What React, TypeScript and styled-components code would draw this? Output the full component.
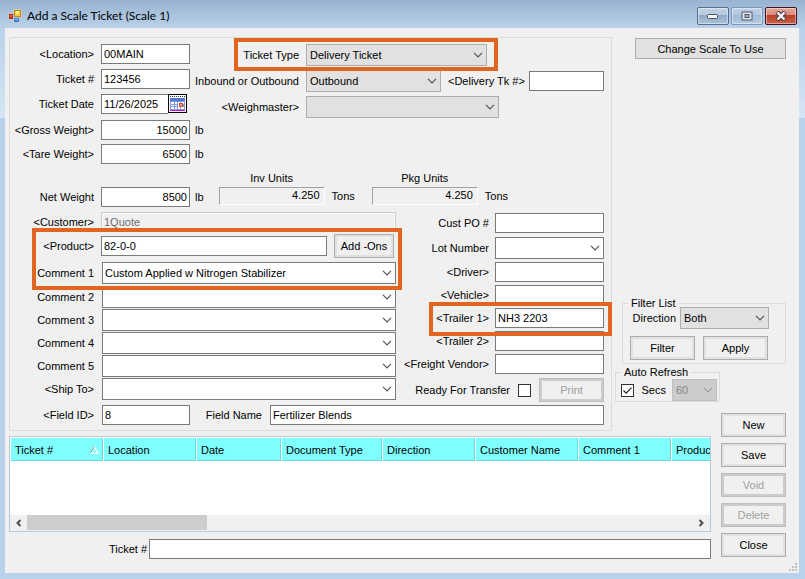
import React from "react";
import styled, { createGlobalStyle, css } from "styled-components";

const Global = createGlobalStyle`
  * { box-sizing: border-box; }
  body { margin: 0; }
  body, input, select, button, th {
    font-family: "Liberation Sans", Arial, sans-serif;
    font-size: 11px;
    line-height: 14px;
    color: #000;
  }
`;

const Window = styled.div`
  min-height: 100vh;
  display: flex;
  flex-direction: column;
  padding: 0 6px 6px 5px;
  background: linear-gradient(#98b3d0 0, #b9d1ea 28px, #d7e5f5 118px, #b9d1ea 118px);
`;

const TitleBar = styled.header`
  display: flex;
  align-items: center;
  height: 28px;
  padding: 4px 2px 0 3px;
  gap: 5px;
`;

const Title = styled.h1`
  flex: 1;
  margin: 0;
  font: 12px/16px Lato, "Open Sans", sans-serif;
`;

const Controls = styled.div`
  display: flex;
  gap: 2px;
`;

const ControlButton = styled.button<{ $close?: boolean; $faded?: boolean }>`
  display: flex;
  align-items: center;
  justify-content: center;
  width: 32px;
  height: 18px;
  padding: 0;
  border: 1px solid ${(p) => (p.$close ? "#431422" : p.$faded ? "#7d97b6" : "#566f8d")};
  border-radius: 2px;
  box-shadow: inset 0 0 0 1px rgba(255, 255, 255, 0.45);
  background: ${(p) =>
    p.$close
      ? "linear-gradient(#e5a598 0, #d98c7c 45%, #b93c22 46%, #c9634a 100%)"
      : p.$faded
        ? "linear-gradient(#bcd0e6 0, #b2c8e0 45%, #a2bcd7 46%, #b3cae2 100%)"
        : "linear-gradient(#c1d2e4 0, #b4c8dd 45%, #92abc5 46%, #abc2d9 100%)"};
`;

const Body = styled.main`
  flex: 1;
  display: grid;
  grid-template-columns: minmax(0, 1fr) 99px 88px;
  grid-template-rows: auto auto 1fr;
  padding: 9px 0 0 4px;
  background: #f0f0f0;
`;

const FormFrame = styled.form`
  grid-column: 1;
  grid-row: 1;
  display: flex;
  flex-direction: column;
  padding: 6px 7px 5px 0;
  border: 1px solid #dcdcdc;
`;

const TopFields = styled.div`
  display: flex;
`;

const TicketFields = styled.div`
  display: flex;
  flex-direction: column;
  width: 184px;
`;

const Stack = styled.div<{ $gap: number; $top?: number }>`
  display: flex;
  flex-direction: column;
  gap: ${(p) => p.$gap}px;
  margin-top: ${(p) => p.$top ?? 0}px;
`;

const TypeFields = styled.div`
  flex: 1;
  display: flex;
  flex-direction: column;
  gap: 4px;
`;

const Row = styled.div<{ $height?: number; $gap?: number }>`
  display: flex;
  align-items: center;
  gap: ${(p) => p.$gap ?? 7}px;
  min-height: ${(p) => p.$height ?? 20}px;
`;

const ProductRow = styled(Row)`
  padding-right: 2px;
`;

const highlight = css`
  content: "";
  position: absolute;
  z-index: 1;
  border: 4px solid #e0661f;
  pointer-events: none;
`;

const TypeHighlight = styled.div`
  position: relative;
  width: 293px;
  &::after { ${highlight} inset: -6px -11px -5px 40px; }
`;

const ProductHighlight = styled.div`
  position: relative;
  display: flex;
  flex-direction: column;
  gap: 4px;
  &::after { ${highlight} inset: -6px -6px -6px 22px; }
`;

const TrailerHighlight = styled.div`
  position: relative;
  &::after { ${highlight} inset: -6px -8px -8px 26px; }
`;

const Label = styled.label<{ $width?: number }>`
  flex: none;
  width: ${(p) => (p.$width ? `${p.$width}px` : "auto")};
  text-align: right;
  white-space: nowrap;
`;

const WeightLabel = styled(Label)`
  width: 86px;
  padding-right: 2px;
`;

const TextBox = styled.input<{ $width?: number; $right?: boolean }>`
  ${(p) => (p.$width ? `flex: none; width: ${p.$width}px;` : "flex: 1; width: 0; min-width: 0;")}
  height: 20px;
  padding: 0 2px;
  border: 1px solid #7a7a7a;
  border-radius: 0;
  background: #fff;
  text-align: ${(p) => (p.$right ? "right" : "left")};
  &:disabled {
    border: 1px solid #cccccc;
    box-shadow: inset 0 0 0 1px #fafafa;
    background: #f0f0f0;
    color: #6d6d6d;
  }
`;

const DateBox = styled.div`
  display: flex;
  width: 86px;
  height: 20px;
`;

const DateInput = styled(TextBox)`
  border-right: 0;
`;

const CalendarButton = styled.button`
  display: flex;
  width: 19px;
  height: 19px;
  padding: 0;
  border: 0;
  background: none;
`;

const ComboWrap = styled.span<{ $width?: number }>`
  ${(p) => (p.$width ? `flex: none; width: ${p.$width}px;` : "flex: 1; min-width: 0;")}
  display: grid;
  align-items: center;
  > * { grid-area: 1 / 1; }
  > svg { justify-self: end; margin-right: 4px; pointer-events: none; }
`;

const ComboSelect = styled.select<{ $tone: "white" | "grey" }>`
  appearance: none;
  width: 100%;
  height: 22px;
  padding: 0 18px 0 ${(p) => (p.$tone === "white" ? 2 : 3)}px;
  border: 1px solid ${(p) => (p.$tone === "white" ? "#7a7a7a" : "#adadad")};
  border-radius: 0;
  background: ${(p) => (p.$tone === "white" ? "#fff" : "#e1e1e1")};
  &:disabled {
    opacity: 1;
    border-color: #bfbfbf;
    background: #cccccc;
    color: #838383;
  }
`;

const Measures = styled.div`
  display: flex;
  align-items: flex-end;
`;

const Unit = styled.span`
  align-self: center;
`;

const Measure = styled.div<{ $left: number }>`
  display: grid;
  grid-template-columns: 106px auto;
  column-gap: 7px;
  row-gap: 2px;
  margin-left: ${(p) => p.$left}px;
  padding-bottom: 2px;
`;

const MeasureLabel = styled.label`
  grid-column: 1;
  text-align: center;
`;

const Readout = styled.output`
  grid-column: 1;
  height: 18px;
  padding: 0 4px 0 0;
  border: 1px solid;
  border-color: #a0a0a0 #fff #fff #a0a0a0;
  text-align: right;
`;

const Details = styled.div`
  display: flex;
  gap: 7px;
`;

const LeftDetails = styled.div`
  flex: 1;
  min-width: 0;
  display: flex;
  flex-direction: column;
  padding-top: 5px;
  gap: 2px;
`;

const RightDetails = styled.div`
  width: 201px;
  display: flex;
  flex-direction: column;
  gap: 3px;
  padding-top: 5px;
`;

const Button = styled.button<{ $width?: number; $flat?: boolean }>`
  flex: none;
  width: ${(p) => (p.$width ? `${p.$width}px` : "auto")};
  height: ${(p) => (p.$flat ? 21 : 24)}px;
  padding: 0;
  border: 1px solid #adadad;
  border-radius: 0;
  background: ${(p) => (p.$flat ? "#e1e1e1" : "#f0f0f0")};
  box-shadow: ${(p) => (p.$flat ? "none" : "inset 0 0 0 2px #e1e1e1")};
  white-space: nowrap;
  &:disabled {
    border-color: #bfbfbf;
    box-shadow: inset 0 0 0 2px #cccccc;
    color: #a0a0a0;
  }
`;

const Check = styled.input`
  appearance: none;
  flex: none;
  width: 13px;
  height: 13px;
  margin: 0;
  border: 1px solid #333;
  background: #fff;
  &:checked {
    background: #fff
      url("data:image/svg+xml,%3Csvg xmlns='http://www.w3.org/2000/svg' viewBox='0 0 11 11'%3E%3Cpath d='M1.5 5.5l2.7 2.7 5.3-5.6' fill='none' stroke='%23222' stroke-width='1.2'/%3E%3C/svg%3E");
  }
`;

const Side = styled.aside`
  grid-column: 2 / 4;
  grid-row: 1;
  display: flex;
  flex-direction: column;
  justify-content: space-between;
  padding: 1px 13px 29px 3px;
`;

const SideTop = styled.div`
  display: flex;
  flex-direction: column;
  padding-left: 20px;
`;

const Group = styled.fieldset`
  margin: 0;
  min-width: 0;
  padding: 0;
  border: 1px solid #dcdcdc;
`;

const GroupTitle = styled.legend`
  margin-left: 5px;
  padding: 0 3px;
  line-height: 8px;
`;

const FilterGroup = styled(Group)`
  margin-left: 7px;
`;

const FilterContent = styled.div`
  padding: 0 7px 3px;
`;

const RefreshGroup = styled(Group)`
  width: 105px;
  margin-top: 4px;
`;

const RefreshContent = styled.div`
  padding: 3px 2px 0 5px;
`;

const FilterButtons = styled.div`
  display: flex;
  gap: 8px;
  margin-top: 7px;
`;

const Actions = styled.nav`
  grid-column: 3;
  grid-row: 1 / 3;
  align-self: end;
  display: flex;
  flex-direction: column;
  gap: 6px;
  padding: 0 13px 2px 10px;
`;

const Lower = styled.section`
  grid-column: 1 / 3;
  grid-row: 2;
  min-width: 0;
  display: flex;
  flex-direction: column;
  gap: 7px;
  padding-top: 5px;
`;

const TableFrame = styled.div`
  display: flex;
  flex-direction: column;
  height: 96px;
  border: 1px solid #b8c9db;
  background: #fff;
`;

const TableScroll = styled.div`
  flex: 1;
  overflow: hidden;
`;

const Table = styled.table`
  width: 754px;
  table-layout: fixed;
  border-collapse: collapse;
`;

const HeaderCell = styled.th<{ $width: number }>`
  width: ${(p) => p.$width}px;
  height: 24px;
  padding: 0 0 0 4px;
  border: 1px solid #fff;
  background: #80ffff;
  box-shadow: inset -1px -1px 0 #6cd9dc;
  font-weight: 400;
  text-align: left;
  white-space: nowrap;
`;

const HeaderContent = styled.span`
  display: flex;
  justify-content: space-between;
  align-items: center;
  padding-right: 4px;
`;

const ScrollBar = styled.div`
  display: flex;
  height: 16px;
  padding-bottom: 1px;
  background: #f0f0f0;
`;

const ScrollArrow = styled.button`
  display: flex;
  align-items: center;
  justify-content: center;
  width: 17px;
  padding: 0;
  border: 0;
  background: none;
`;

const ScrollTrack = styled.div`
  flex: 1;
`;

const ScrollThumb = styled.div`
  width: 27%;
  height: 100%;
  background: #cdcdcd;
`;

const Footer = styled.footer`
  grid-column: 1 / 4;
  display: flex;
  justify-content: flex-end;
  align-items: flex-end;
  height: 14px;
  align-self: end;
  padding: 0 2px 2px 0;
`;

const Chevron = ({ color = "#555" }: { color?: string }) => (
  <svg width="10" height="6" viewBox="0 0 10 6">
    <path d="M1 .8l4 4 4-4" fill="none" stroke={color} strokeWidth="1.2" />
  </svg>
);

type ComboProps = {
  id: string;
  value?: string;
  width?: number;
  tone?: "white" | "grey";
  disabled?: boolean;
};

const Combo = ({ id, value = "", width, tone = "white", disabled }: ComboProps) => (
  <ComboWrap $width={width}>
    <ComboSelect id={id} $tone={tone} disabled={disabled} defaultValue={value}>
      <option value={value}>{value}</option>
    </ComboSelect>
    <Chevron color={disabled ? "#a0a0a0" : "#555"} />
  </ComboWrap>
);

const AppIcon = () => (
  <svg width="14" height="14" viewBox="0 0 14 14">
    <path d="M.5 3.5h5v-3h8v8h-2v5h-6v-3h-5z" fill="none" stroke="#c9c9c9" />
    <rect x="1" y="5" width="4" height="5" fill="#b82a20" />
    <rect x="2" y="6" width="2" height="2" fill="#e2685a" />
    <rect x="6.500" y="1.500" width="6" height="6" fill="#f8cd3c" stroke="#c48a12" />
    <rect x="8" y="2" width="3" height="3" fill="#fdeb9a" />
    <rect x="6" y="9" width="5" height="4" fill="#3d7fd9" />
    <rect x="7" y="10" width="3" height="1" fill="#8fbdf2" />
  </svg>
);

const CalendarIcon = () => (
  <svg width="19" height="19" viewBox="0 0 19 19" shapeRendering="crispEdges">
    <rect x=".5" y=".5" width="18" height="18" fill="#fff" stroke="#000" />
    <path d="M2 2.500h15" stroke="#333" strokeDasharray="1 1" />
    <rect x="2" y="4" width="15" height="3" fill="#4f79d6" />
    <rect x="2" y="7" width="15" height="9" fill="#7f9bdc" />
    <path d="M3 8h3v2H3zM7 8h2v2H7zM10 8h2v2h-2zM13 8h3v2h-3zM3 11h3v1H3zM7 11h2v1H7zM3 13h3v2H3zM7 13h2v2H7zM10 13h2v2h-2zM13 13h3v2h-3z" fill="#fff" />
    <path d="M10 9h4v4h-4z" fill="#fff" />
    <path d="M11 9h4v4h-4z" fill="#e4472c" />
    <path d="M12 10h2v2h-2z" fill="#ff9a7c" />
    <path d="M2 16.500h15" stroke="#d400d4" />
  </svg>
);

const SortIcon = () => (
  <svg width="9" height="8" viewBox="0 0 9 8">
    <path d="M4.500 1L8 7.500H1z" fill="none" stroke="#fff" strokeWidth="1.3" />
    <path d="M.5 7L4.300.8" stroke="#7f9a9c" />
  </svg>
);

const Grip = () => (
  <svg width="8" height="8" viewBox="0 0 8 8" fill="#bfbfbf">
    <path d="M6 0h2v2H6zM3 3h2v2H3zM6 3h2v2H6zM0 6h2v2H0zM3 6h2v2H3zM6 6h2v2H6z" />
  </svg>
);

const columns: [string, number][] = [
  ["Ticket #", 93],
  ["Location", 93],
  ["Date", 85],
  ["Document Type", 101],
  ["Direction", 93],
  ["Customer Name", 103],
  ["Comment 1", 93],
  ["Product", 93],
];

const comments = [2, 3, 4, 5];

export default function App() {
  return (
    <>
      <Global />
      <Window>
        <TitleBar>
          <AppIcon />
          <Title>Add a Scale Ticket (Scale 1)</Title>
          <Controls>
            <ControlButton aria-label="Minimize">
              <svg width="12" height="6" viewBox="0 0 12 6">
                <rect x=".5" y="1.500" width="10" height="4" rx="1" fill="#f4f4f4" stroke="#4b5563" />
              </svg>
            </ControlButton>
            <ControlButton $faded aria-label="Maximize">
              <svg width="12" height="10" viewBox="0 0 12 10">
                <rect x="1" y="1" width="10" height="8" fill="#dfe3e8" stroke="#525b68" />
                <rect x="4" y="3.500" width="4" height="3" fill="#9fb6d2" stroke="#525b68" />
              </svg>
            </ControlButton>
            <ControlButton $close aria-label="Close window">
              <svg width="12" height="10" viewBox="0 0 12 10">
                <path d="M2 1l8 8M10 1L2 9" stroke="#4a4350" strokeWidth="4.500" />
                <path d="M2.500 1.500l7 7M9.500 1.500l-7 7" stroke="#f4f4f4" strokeWidth="2.400" />
              </svg>
            </ControlButton>
          </Controls>
        </TitleBar>

        <Body>
          <FormFrame onSubmit={(e) => e.preventDefault()}>
            <TopFields>
              <TicketFields>
                <Stack $gap={5}>
                  <Row>
                    <Label $width={84} htmlFor="location">&lt;Location&gt;</Label>
                    <TextBox id="location" $width={89} defaultValue="00MAIN" />
                  </Row>
                  <Row>
                    <Label $width={84} htmlFor="ticket">Ticket #</Label>
                    <TextBox id="ticket" $width={89} defaultValue="123456" />
                  </Row>
                  <Row>
                    <Label $width={84} htmlFor="date">Ticket Date</Label>
                    <DateBox>
                      <DateInput id="date" defaultValue="11/26/2025" />
                      <CalendarButton type="button" aria-label="Pick a date">
                        <CalendarIcon />
                      </CalendarButton>
                    </DateBox>
                  </Row>
                </Stack>
                <Stack $gap={4} $top={6}>
                  <Row $gap={5}>
                    <WeightLabel htmlFor="gross">&lt;Gross Weight&gt;</WeightLabel>
                    <TextBox id="gross" $width={89} $right defaultValue="15000" />
                    <span>lb</span>
                  </Row>
                  <Row $gap={5}>
                    <WeightLabel htmlFor="tare">&lt;Tare Weight&gt;</WeightLabel>
                    <TextBox id="tare" $width={89} $right defaultValue="6500" />
                    <span>lb</span>
                  </Row>
                </Stack>
              </TicketFields>
              <TypeFields>
                <TypeHighlight>
                  <Row $height={22}>
                    <Label $width={105} htmlFor="type">Ticket Type</Label>
                    <Combo id="type" tone="grey" width={181} value="Delivery Ticket" />
                  </Row>
                </TypeHighlight>
                <Row $height={22}>
                  <Label $width={105} htmlFor="bound">Inbound or Outbound</Label>
                  <Combo id="bound" tone="grey" width={135} value="Outbound" />
                  <Label $width={74} htmlFor="delivery">&lt;Delivery Tk #&gt;</Label>
                  <TextBox id="delivery" />
                </Row>
                <Row $height={22}>
                  <Label $width={105} htmlFor="weighmaster">&lt;Weighmaster&gt;</Label>
                  <Combo id="weighmaster" tone="grey" width={193} />
                </Row>
              </TypeFields>
            </TopFields>

            <Stack $gap={0} $top={7}>
              <Measures>
                <Row $gap={5}>
                  <WeightLabel htmlFor="net">Net Weight</WeightLabel>
                  <TextBox id="net" $width={89} $right defaultValue="8500" />
                  <span>lb</span>
                </Row>
                <Measure $left={15}>
                  <MeasureLabel htmlFor="inv">Inv Units</MeasureLabel>
                  <Readout id="inv">4.250</Readout>
                  <Unit>Tons</Unit>
                </Measure>
                <Measure $left={17}>
                  <MeasureLabel htmlFor="pkg">Pkg Units</MeasureLabel>
                  <Readout id="pkg">4.250</Readout>
                  <Unit>Tons</Unit>
                </Measure>
              </Measures>
            </Stack>

            <Details>
              <LeftDetails>
                <Row>
                  <Label $width={84} htmlFor="customer">&lt;Customer&gt;</Label>
                  <TextBox id="customer" disabled defaultValue="1Quote" />
                </Row>
                <ProductHighlight>
                  <ProductRow $height={24}>
                    <Label $width={84} htmlFor="product">&lt;Product&gt;</Label>
                    <TextBox id="product" defaultValue="82-0-0" />
                    <Button type="button" $width={60}>Add -Ons</Button>
                  </ProductRow>
                  <Row $height={22} $gap={8}>
                    <Label $width={84} htmlFor="comment1">Comment 1</Label>
                    <Combo id="comment1" value="Custom Applied w Nitrogen Stabilizer" />
                  </Row>
                </ProductHighlight>
                <Stack $gap={1}>
                  {comments.map((n) => (
                    <Row key={n} $height={22} $gap={8}>
                      <Label $width={84} htmlFor={`comment${n}`}>Comment {n}</Label>
                      <Combo id={`comment${n}`} />
                    </Row>
                  ))}
                  <Row $height={22} $gap={8}>
                    <Label $width={84} htmlFor="shipto">&lt;Ship To&gt;</Label>
                    <Combo id="shipto" />
                  </Row>
                </Stack>
              </LeftDetails>
              <RightDetails>
                <Row $height={22} $gap={6}>
                  <Label $width={86} htmlFor="po">Cust PO #</Label>
                  <TextBox id="po" />
                </Row>
                <Row $height={22} $gap={6}>
                  <Label $width={86} htmlFor="lot">Lot Number</Label>
                  <Combo id="lot" />
                </Row>
                <Row $gap={6}>
                  <Label $width={86} htmlFor="driver">&lt;Driver&gt;</Label>
                  <TextBox id="driver" />
                </Row>
                <Row $gap={6}>
                  <Label $width={86} htmlFor="vehicle">&lt;Vehicle&gt;</Label>
                  <TextBox id="vehicle" />
                </Row>
                <TrailerHighlight>
                  <Row $gap={6}>
                    <Label $width={86} htmlFor="trailer1">&lt;Trailer 1&gt;</Label>
                    <TextBox id="trailer1" defaultValue="NH3 2203" />
                  </Row>
                </TrailerHighlight>
                <Row $gap={6}>
                  <Label $width={86} htmlFor="trailer2">&lt;Trailer 2&gt;</Label>
                  <TextBox id="trailer2" />
                </Row>
                <Row $gap={6}>
                  <Label $width={86} htmlFor="vendor">&lt;Freight Vendor&gt;</Label>
                  <TextBox id="vendor" />
                </Row>
                <Row $height={26} $gap={8}>
                  <Label $width={107} htmlFor="ready">Ready For Transfer</Label>
                  <Check id="ready" type="checkbox" />
                  <Button type="button" disabled $width={65}>Print</Button>
                </Row>
              </RightDetails>
            </Details>

            <Stack $gap={0} $top={2}>
              <Row $gap={8}>
                <Label $width={84} htmlFor="fieldid">&lt;Field ID&gt;</Label>
                <TextBox id="fieldid" $width={88} defaultValue="8" />
                <Label $width={64} htmlFor="fieldname">Field Name</Label>
                <TextBox id="fieldname" defaultValue="Fertilizer Blends" />
              </Row>
            </Stack>
          </FormFrame>

          <Side>
            <SideTop>
              <Button $flat>Change Scale To Use</Button>
            </SideTop>
            <div>
              <FilterGroup>
                <GroupTitle>Filter List</GroupTitle>
                <FilterContent>
                  <Row $height={22} $gap={4}>
                    <Label $width={46} htmlFor="direction">Direction</Label>
                    <Combo id="direction" tone="grey" width={89} value="Both" />
                  </Row>
                  <FilterButtons>
                    <Button $width={65}>Filter</Button>
                    <Button $width={65}>Apply</Button>
                  </FilterButtons>
                </FilterContent>
              </FilterGroup>
              <RefreshGroup>
                <GroupTitle>Auto Refresh</GroupTitle>
                <RefreshContent>
                  <Row $height={22} $gap={6}>
                    <Check id="auto" type="checkbox" defaultChecked />
                    <Label $width={26} htmlFor="auto">Secs</Label>
                    <Combo id="secs" tone="grey" disabled value="60" />
                  </Row>
                </RefreshContent>
              </RefreshGroup>
            </div>
          </Side>

          <Lower>
            <TableFrame>
              <TableScroll>
                <Table>
                  <thead>
                    <tr>
                      {columns.map(([name, width], i) => (
                        <HeaderCell key={name} $width={width} scope="col">
                          <HeaderContent>
                            {name}
                            {i === 0 && <SortIcon />}
                          </HeaderContent>
                        </HeaderCell>
                      ))}
                    </tr>
                  </thead>
                </Table>
              </TableScroll>
              <ScrollBar>
                <ScrollArrow aria-label="Scroll left">
                  <svg width="7" height="8" viewBox="0 0 7 8">
                    <path d="M5.500 1l-3 3 3 3" fill="none" stroke="#505050" strokeWidth="2" />
                  </svg>
                </ScrollArrow>
                <ScrollTrack>
                  <ScrollThumb />
                </ScrollTrack>
                <ScrollArrow aria-label="Scroll right">
                  <svg width="7" height="8" viewBox="0 0 7 8">
                    <path d="M1.500 1l3 3-3 3" fill="none" stroke="#505050" strokeWidth="2" />
                  </svg>
                </ScrollArrow>
              </ScrollBar>
            </TableFrame>
            <Row $gap={2}>
              <Label $width={138} htmlFor="find">Ticket #</Label>
              <TextBox id="find" />
            </Row>
          </Lower>

          <Actions aria-label="Ticket actions">
            <Button>New</Button>
            <Button>Save</Button>
            <Button disabled>Void</Button>
            <Button disabled>Delete</Button>
            <Button>Close</Button>
          </Actions>

          <Footer>
            <Grip />
          </Footer>
        </Body>
      </Window>
    </>
  );
}
